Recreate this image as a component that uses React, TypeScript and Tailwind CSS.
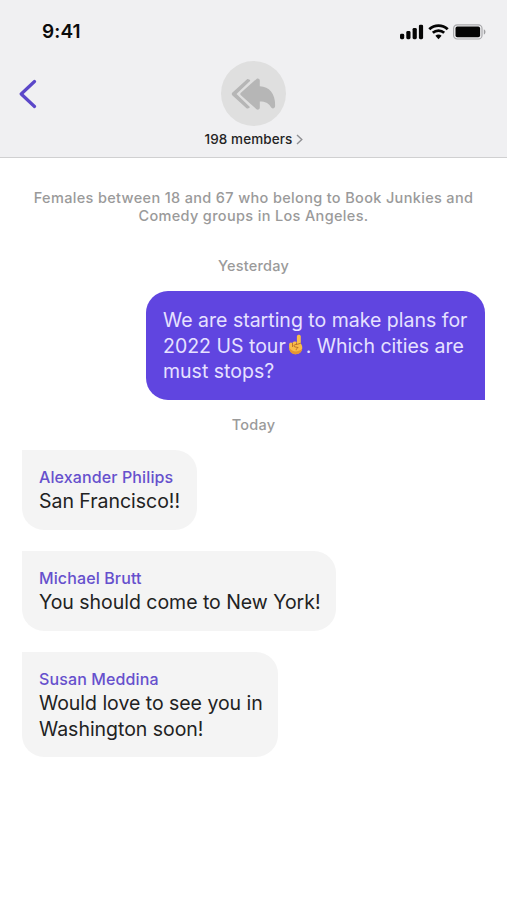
const messages = [
  { name: 'Alexander Philips', lines: ['San Francisco!!'], width: 'w-[175px]', height: 'h-20' },
  { name: 'Michael Brutt', lines: ['You should come to New York!'], width: 'w-[314px]', height: 'h-20' },
  { name: 'Susan Meddina', lines: ['Would love to see you in', 'Washington soon!'], width: 'w-64', height: 'h-[105px]' },
];

const SignalIcon = () => (
  <svg width="24" height="16" viewBox="0 0 24 16" fill="#050505">
    <rect x="0" y="9.8" width="4.2" height="5.4" rx="1.4" />
    <rect x="6.3" y="7" width="4.2" height="8.2" rx="1.4" />
    <rect x="12.6" y="3.9" width="4.2" height="11.3" rx="1.4" />
    <rect x="18.9" y="0.7" width="4.2" height="14.5" rx="1.4" />
  </svg>
);

const WifiIcon = () => (
  <svg width="21" height="16" viewBox="0 0 21 16" fill="none" stroke="#050505">
    <path d="M1.3 5.2C6.6 0.4 14.4 0.4 19.7 5.2" strokeWidth="2.9" />
    <path d="M4.8 8.8C8.1 5.8 12.9 5.8 16.2 8.8" strokeWidth="2.7" />
    <path d="M7.4 11.8C9.2 10.2 11.8 10.2 13.6 11.8L10.5 15.2Z" fill="#050505" stroke="none" />
  </svg>
);

const BatteryIcon = () => (
  <svg width="34" height="16" viewBox="0 0 34 16">
    <rect x="0.6" y="0.8" width="28.4" height="14.2" rx="3.6" fill="none" stroke="#a9a9ac" strokeWidth="1.2" />
    <rect x="2.5" y="2.6" width="24.6" height="10.7" rx="1.8" fill="#050505" />
    <path d="M30.8 5.3C33 6.1 33 9.8 30.8 10.6Z" fill="#9f9fa2" />
  </svg>
);

const ReplyAllIcon = () => (
  <svg className="-translate-x-[0.5px]" width="44" height="32" viewBox="0 0 44 32" fill="#b6b6b6">
    <path d="M15.3 1.4C16.4 0.6 18.2 1.6 18.8 2.8L5 16L18.4 29C17.6 30.3 16 31 15 30.2L0.7 17.2C-0.1 16.5 -0.1 15.5 0.7 14.8Z" />
    <path d="M25 0.9C26.2 -0.1 28.3 0.6 28.3 2.4V8.3C38 8.6 43.9 16 43.7 27.8C43.6 30.6 40.5 31.3 39.3 29C37 24.9 33.8 23.5 28.3 23.5V29.6C28.3 31.6 26.1 32.2 25 31.2L9.4 17.2C8.6 16.5 8.6 15.5 9.4 14.8Z" />
  </svg>
);

const PointUpIcon = () => (
  <svg className="inline-block align-[-2px]" width="20" height="21" viewBox="0 0 20 21">
    <path d="M10.9 8.6V2.3C10.9 0.1 14.8 0.1 14.8 2.3V9.4C16 11 16.5 12.8 16.2 14.6C15.6 18.2 13.3 20.2 9.8 20.2C6 20.2 3.1 17.4 3.1 13.8V10.5C3.1 8.5 5 7.8 6.4 8.9C7.4 7.3 10.2 7.2 10.9 8.6Z" fill="#f8bd4a" />
    <path d="M3.1 13.4C3.1 17.4 6 20.2 9.8 20.2C13.3 20.2 15.6 18.2 16.2 14.6C13.4 18.4 6.2 18.6 3.1 13.4Z" fill="#e49532" />
    <path d="M6.5 9.4V12.6M10.5 8.8V10.2M14.5 9.3C12.7 10.1 11 10.4 9 10.7C7.6 10.9 7.5 12.6 9 12.9L12.2 13.5C10.8 14.1 10.2 14.9 10.2 15.9" fill="none" stroke="#ad6428" strokeWidth="0.8" strokeLinecap="round" />
  </svg>
);

const App = () => (
  <div className="flex h-[900px] w-[507px] flex-col overflow-hidden bg-white font-['Inter',sans-serif]">
    {/* Header */}
    <header className="flex h-[158px] shrink-0 flex-col border-b border-[#d0d0d1] bg-[#f0f0f2]">
      <div className="flex h-[61px] items-center justify-between pt-[3px] pr-5 pl-[42px]">
        <span className="text-[19px] leading-6 font-semibold tracking-[0.1px] text-[#0b0b0b]">9:41</span>
        <div className="flex items-center gap-1">
          <SignalIcon />
          <WifiIcon />
          <BatteryIcon />
        </div>
      </div>
      <div className="grid grid-cols-[60px_1fr_60px]">
        <button className="flex h-[66px] items-center pl-[19px]" aria-label="Back">
          <svg width="18" height="30" viewBox="0 0 18 30" fill="none" stroke="#5b47c9" strokeWidth="3.2" strokeLinecap="round" strokeLinejoin="round">
            <path d="M15.5 2.5L2.2 15L15.5 27.5" />
          </svg>
        </button>
        <div className="flex flex-col items-center">
          <div className="flex size-[65px] items-center justify-center rounded-full bg-[#dfdfdf]">
            <ReplyAllIcon />
          </div>
          <div className="mt-[3px] flex h-5 items-center gap-1 pl-px">
            <span className="text-[13.5px] font-medium tracking-[0.1px] text-[#242424]">198 members</span>
            <svg width="7" height="11" viewBox="0 0 7 11" fill="none" stroke="#8f8f92" strokeWidth="1.4">
              <path d="M1 1L5.8 5.5L1 10" />
            </svg>
          </div>
        </div>
      </div>
    </header>

    {/* Conversation */}
    <main className="flex flex-col px-[22px] pt-[31px] text-[#222222]">
      <p className="text-center text-[14.5px] leading-[18px] font-medium tracking-[0.34px] text-[#9a9a9a]">
        Females between 18 and 67 who belong to Book Junkies and
        <br />
        Comedy groups in Los Angeles.
      </p>
      <p className="mt-8 text-center text-[14.5px] leading-[18px] font-medium tracking-[0.2px] text-[#9a9a9a]">Yesterday</p>
      <div className="mt-4 h-[109px] w-[339px] self-end rounded-t-[22px] rounded-bl-[22px] bg-[#6045e0] px-[17px] pt-[17px] text-[19.5px] leading-[25.5px] whitespace-nowrap text-[#e6e1ff]">
        We are starting to make plans for
        <br />
        2022 US tour
        <PointUpIcon />
        . Which cities are
        <br />
        must stops?
      </div>
      <p className="mt-4 text-center text-[14.5px] leading-[18px] font-medium tracking-[0.2px] text-[#9a9a9a]">Today</p>
      <div className="mt-4 flex flex-col gap-[21px]">
        {messages.map((msg) => (
          <div key={msg.name} className={`${msg.width} ${msg.height} rounded-r-[22px] rounded-bl-[22px] bg-[#f4f4f4] px-[17px] pt-[17px] whitespace-nowrap`}>
            <h2 className="mb-0.5 text-[16px] leading-5 font-medium tracking-[0.12px] text-[#6650cd]">{msg.name}</h2>
            {msg.lines.map((line) => (
              <p key={line} className="text-[19.5px] leading-[25.5px] tracking-[-0.03px]">{line}</p>
            ))}
          </div>
        ))}
      </div>
    </main>
  </div>
);

export default App;
